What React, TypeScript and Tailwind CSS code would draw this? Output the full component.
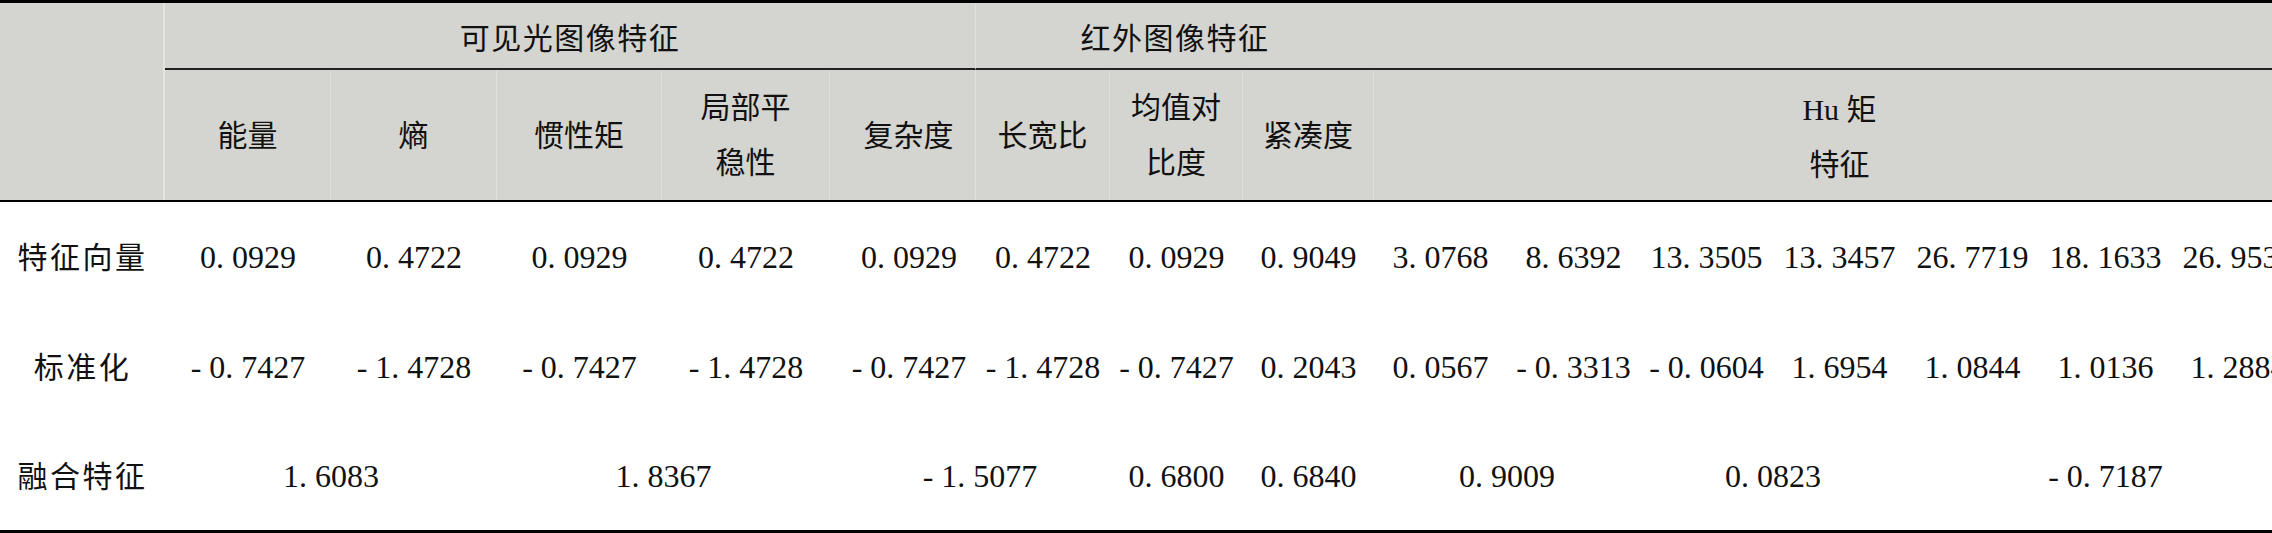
import React from "react";

const cols =
  "grid grid-cols-[165px_166px_166px_165px_168px_146px_134px_133px_131px_133px_133px_133px_133px_133px_133px_133px]";

const num = "flex items-center justify-center text-[32px] leading-none whitespace-nowrap";
const lab = "flex items-center justify-center text-[30px] tracking-[2.5px] whitespace-nowrap";
const sub =
  "flex items-center justify-center text-center text-[30px] leading-[55px] border-r border-[#dfdfdb] whitespace-nowrap";

const row1 = [
  "0. 0929", "0. 4722", "0. 0929", "0. 4722", "0. 0929", "0. 4722", "0. 0929", "0. 9049",
  "3. 0768", "8. 6392", "13. 3505", "13. 3457", "26. 7719", "18. 1633", "26. 9532",
];
const row2 = [
  "- 0. 7427", "- 1. 4728", "- 0. 7427", "- 1. 4728", "- 0. 7427", "- 1. 4728", "- 0. 7427", "0. 2043",
  "0. 0567", "- 0. 3313", "- 0. 0604", "1. 6954", "1. 0844", "1. 0136", "1. 2884",
];

export default function App() {
  return (
    <div className="w-[2272px] h-[533px] overflow-hidden bg-white text-[#111] font-['Liberation_Serif','Noto_Sans_CJK_SC',serif]">
      <div className="w-[2305px]">
        {/* Header */}
        <div className={`${cols} grid-rows-[67px_130px] bg-[#d4d4d0] border-t-[3px] border-b-2 border-black`}>
          <div className="row-span-2 border-r-2 border-[#e3e3df]" />
          <div className="col-span-5 flex items-center justify-center pt-[6px] text-[30px] tracking-[1.5px] border-b-2 border-b-[#222] border-r border-r-[#dfdfdb]">
            可见光图像特征
          </div>
          <div className="col-span-3 flex items-center justify-center pt-[6px] text-[30px] tracking-[1.5px] border-b-2 border-b-[#222]">
            红外图像特征
          </div>
          <div className="col-span-7 border-b-2 border-b-[#222]" />

          <div className={sub}>能量</div>
          <div className={sub}>熵</div>
          <div className={sub}>惯性矩</div>
          <div className={sub}>
            局部平
            <br />
            稳性
          </div>
          <div className={`${sub} pl-[12px]`}>复杂度</div>
          <div className={sub}>长宽比</div>
          <div className={sub}>
            均值对
            <br />
            比度
          </div>
          <div className={sub}>紧凑度</div>
          <div className="col-span-7 flex items-center justify-center text-center text-[30px] leading-[55px] pt-[4px]">
            Hu 矩
            <br />
            特征
          </div>
        </div>

        {/* Body */}
        <div className={`${cols} grid-rows-[110px_110px_108px] border-b-[3px] border-black`}>
          <div className={lab}>特征向量</div>
          {row1.map((v, i) => (
            <div key={`a${i}`} className={`${num} ${i === 4 ? "pl-[12px]" : ""}`}>
              {v}
            </div>
          ))}

          <div className={lab}>标准化</div>
          {row2.map((v, i) => (
            <div key={`b${i}`} className={`${num} ${i === 4 ? "pl-[12px]" : ""}`}>
              {v}
            </div>
          ))}

          <div className={lab}>融合特征</div>
          <div className={`${num} col-span-2`}>1. 6083</div>
          <div className={`${num} col-span-2`}>1. 8367</div>
          <div className={`${num} col-span-2 pl-[20px]`}>- 1. 5077</div>
          <div className={num}>0. 6800</div>
          <div className={num}>0. 6840</div>
          <div className={`${num} col-span-2`}>0. 9009</div>
          <div className={`${num} col-span-2`}>0. 0823</div>
          <div className={`${num} col-span-3`}>- 0. 7187</div>
        </div>
      </div>
    </div>
  );
}
